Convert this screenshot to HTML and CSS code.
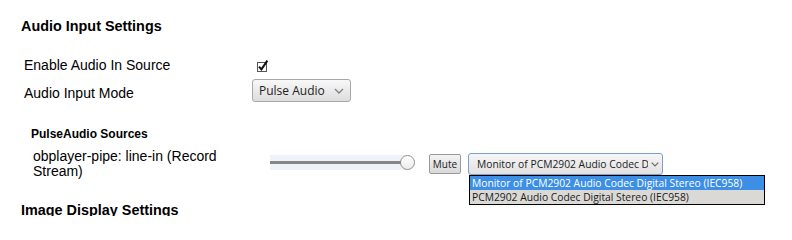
FILE: index.html
```html
<!DOCTYPE html>
<html lang="en">
<head>
<meta charset="utf-8">
<title>Audio Input Settings</title>
<link rel="stylesheet" href="styles.css">
</head>
<body>
<div class="page">
  <h2 class="section-title">Audio Input Settings</h2>
  <div class="settings">
    <div class="label">Enable Audio In Source</div>
    <div class="value">
      <span class="checkbox">
        <svg width="13" height="13" viewBox="0 0 13 13" aria-hidden="true">
          <rect x="1.5" y="3.5" width="9" height="9" fill="#fff" stroke="#555" stroke-width="1"/>
          <path d="M3 7.6 L5.4 10.4 L11.4 1.6" fill="none" stroke="#111" stroke-width="2"/>
        </svg>
      </span>
    </div>
    <div class="label label-select">Audio Input Mode</div>
    <div class="value">
      <div class="select select-mode">
        <span class="select-text">Pulse Audio</span>
        <svg class="chev" width="10" height="6" viewBox="0 0 10 6" aria-hidden="true"><path d="M1 1 L5 5 L9 1" fill="none" stroke="#808080" stroke-width="1.3"/></svg>
      </div>
    </div>
  </div>

  <h3 class="sub-title">PulseAudio Sources</h3>
  <div class="source-row">
    <div class="source-name">obplayer-pipe: line-in (Record Stream)</div>
    <div class="slider">
      <div class="track"><div class="track-line"></div></div>
      <div class="thumb"></div>
    </div>
    <button class="mute">Mute</button>
    <div class="select-wrap">
      <div class="select select-source">
        <span class="select-text">Monitor of PCM2902 Audio Codec Digital Stereo (IEC958)</span>
        <svg class="chev" width="8" height="5" viewBox="0 0 8 5" aria-hidden="true"><path d="M0.7 0.7 L4 4 L7.3 0.7" fill="none" stroke="#6b6b6b" stroke-width="1.2"/></svg>
      </div>
      <ul class="popup">
        <li class="option selected">Monitor of PCM2902 Audio Codec Digital Stereo (IEC958)</li>
        <li class="option">PCM2902 Audio Codec Digital Stereo (IEC958)</li>
      </ul>
    </div>
  </div>

  <h2 class="section-title section-next">Image Display Settings</h2>
</div>
</body>
</html>
```

FILE: styles.css
```css
html, body {
  margin: 0;
  padding: 0;
  background: #fff;
}

body {
  font-family: "Liberation Sans", Arial, sans-serif;
  color: #000;
  overflow: hidden;
}

.page {
  height: 216px;
  overflow: hidden;
  padding-left: 21px;
  box-sizing: border-box;
}

.section-title {
  font-size: 14.4px;
  font-weight: bold;
  line-height: 16px;
  margin: 18px 0 0;
}

.section-next {
  margin-top: 23px;
}

.settings {
  display: grid;
  grid-template-columns: 228px auto;
  row-gap: 3px;
  align-items: center;
  justify-items: start;
  margin-top: 20px;
  padding-left: 3px;
}

.label {
  font-size: 14px;
  line-height: 16px;
  padding: 3px 0;
}

.label-select {
  padding: 5px 0 1px;
}

.checkbox {
  display: block;
  margin-left: 4px;
}

.checkbox svg {
  display: block;
}

.select {
  display: flex;
  align-items: center;
  box-sizing: border-box;
  font-family: "Open Sans", "Noto Sans", sans-serif;
  color: #222;
}

.select-text {
  white-space: nowrap;
  overflow: hidden;
}

.chev {
  display: block;
  flex-shrink: 0;
}

.select-mode {
  width: 99px;
  height: 23px;
  padding: 0 6px;
  border: 1px solid #a8a8a8;
  border-radius: 3px;
  background: linear-gradient(#f8f8f8, #dddddd);
  font-size: 12px;
}

.select-mode .chev {
  margin-left: auto;
}

.sub-title {
  font-size: 12px;
  font-weight: bold;
  line-height: 14px;
  margin: 25px 0 0;
  padding-left: 10px;
}

.source-row {
  display: flex;
  align-items: center;
  margin-top: 8px;
  padding-left: 12px;
}

.source-name {
  width: 237px;
  box-sizing: border-box;
  padding-right: 16px;
  font-size: 14px;
  line-height: 15px;
  flex-shrink: 0;
}

.slider {
  display: flex;
  align-items: center;
  width: 145px;
  flex-shrink: 0;
  margin-bottom: 4px;
}

.track {
  flex: 1;
  height: 15px;
  display: flex;
  align-items: center;
  background: #edf3f9;
}

.track-line {
  width: 100%;
  height: 3px;
  background: #868686;
}

.thumb {
  width: 15px;
  height: 15px;
  box-sizing: border-box;
  margin-left: -5px;
  border: 1px solid #8e8e8e;
  border-radius: 50%;
  background: linear-gradient(#ffffff, #ececec);
  flex-shrink: 0;
}

.mute {
  margin: 0 0 0 14px;
  width: 32px;
  height: 20px;
  padding: 0;
  box-sizing: border-box;
  border: 1px solid #9a9a9a;
  border-radius: 2px;
  background: linear-gradient(#f4f4f4, #d9d9d9);
  font-family: "Open Sans", "Noto Sans", sans-serif;
  font-size: 10px;
  color: #222;
  flex-shrink: 0;
}

.select-wrap {
  position: relative;
  margin-left: 7px;
}

.select-source {
  width: 195px;
  height: 22px;
  padding: 0 2px 0 8px;
  border: 1px solid #7d9fd0;
  border-radius: 3px;
  background: linear-gradient(#f6f6f6, #e1e1e1);
  font-size: 10.3px;
}

.select-source .select-text {
  flex: 1;
}

.select-source .chev {
  margin: 0 1px 0 3px;
}

.popup {
  position: absolute;
  top: 100%;
  left: 1px;
  width: 296px;
  box-sizing: border-box;
  margin: 0;
  padding: 0;
  list-style: none;
  border: 1px solid #000;
  background: #dad9d6;
  font-family: "Open Sans", "Noto Sans", sans-serif;
  font-size: 10.3px;
  z-index: 2;
}

.option {
  height: 14px;
  line-height: 14px;
  padding-left: 2px;
  white-space: nowrap;
  color: #1a1a1a;
}

.option.selected {
  background: #3d8fe6;
  color: #fff;
}
```
